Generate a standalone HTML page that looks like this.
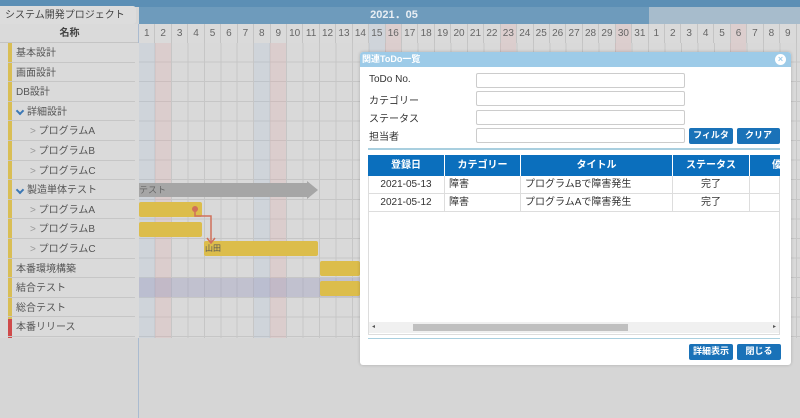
<!DOCTYPE html>
<html><head><meta charset="utf-8"><style>
*{margin:0;padding:0;box-sizing:border-box}
body{width:800px;height:418px;overflow:hidden;background:#d6d6d6;font-family:"Liberation Sans","Noto Sans CJK JP",sans-serif;position:relative;font-size:10px;color:#555}
.a{position:absolute}
.grid{left:139px;top:43px;width:661px;height:295px;background:
repeating-linear-gradient(90deg,transparent 0 15.45px,#c6c6c6 15.45px 16.45px),
repeating-linear-gradient(180deg,transparent 0 18.6px,#c6c6c6 18.6px 19.6px),#d9d9d9}
.day{top:24px;height:19px;width:16.45px;text-align:center;font-size:10px;line-height:19px;color:#666;border-right:1px solid #c4c4c4}
.row{left:8px;width:127px;height:19.6px;border-bottom:1px solid #c6c6c6;line-height:21px;font-size:10px;color:#555}
.inp{left:476px;width:209px;height:15px;background:#fff;border:1px solid #ccc;border-radius:2px}
.lab{left:369px;font-size:10px;color:#333}
.btn{background:#1a72b8;color:#fff;font-size:9px;text-align:center;line-height:15px;height:16px;border-radius:2px;font-weight:bold}
.th{top:155px;height:21px;background:#0b6fbd;color:#fff;font-weight:bold;font-size:10px;line-height:21px;text-align:center;border-right:1px solid #fff}
.td{height:18px;line-height:18px;font-size:10px;color:#333;border-right:1px solid #ddd;border-bottom:1px solid #ddd;padding-left:4px}
.v{display:inline-block;width:6px;height:6px;border-right:2px solid #3b78b5;border-bottom:2px solid #3b78b5;transform:rotate(45deg);margin:0 4px 2px 1px;vertical-align:middle}
</style></head><body>
<div class="a" style="left:0;top:0;width:800px;height:7px;background:#5c8fb5"></div>
<div class="a" style="left:139px;top:7px;width:510px;height:17px;background:#6e9bbc;color:#e8eef4;font-size:11px;text-align:center;line-height:17px;font-weight:bold">2021．05</div>
<div class="a" style="left:649px;top:7px;width:151px;height:17px;background:#a7bccc"></div>
<div class="a" style="left:0;top:6px;width:136px;height:18px;background:#dcdcdc;border-radius:0 3px 3px 0;font-size:10px;line-height:19px;padding-left:5px;color:#444">システム開発プロジェクト</div>
<div class="a" style="left:0;top:24px;width:139px;height:19px;background:#dadada;border-bottom:1px solid #c4c4c4;text-align:center;line-height:20px;font-weight:bold;color:#444;font-size:10px">名称</div>
<div class="a" style="left:0;top:24px;width:139px;height:394px;border-right:1px solid #aabbd0"></div>
<div class="a" style="left:139px;top:24px;width:661px;height:19px;background:#dadada"></div>
<div class="a grid"></div>
<div class="a" style="left:139px;top:43px;width:16px;height:295px;background:rgba(160,190,220,.18)"></div>
<div class="a" style="left:155px;top:43px;width:16px;height:295px;background:rgba(230,160,160,.2)"></div>
<div class="a" style="left:254px;top:43px;width:16px;height:295px;background:rgba(160,190,220,.18)"></div>
<div class="a" style="left:270px;top:43px;width:16px;height:295px;background:rgba(230,160,160,.2)"></div>
<div class="a" style="left:369px;top:24px;width:16px;height:314px;background:rgba(160,190,220,.18)"></div>
<div class="a" style="left:385px;top:24px;width:16px;height:314px;background:rgba(230,160,160,.2)"></div>
<div class="a" style="left:500px;top:24px;width:16px;height:30px;background:rgba(230,160,160,.2)"></div>
<div class="a" style="left:615px;top:24px;width:16px;height:30px;background:rgba(230,160,160,.2)"></div>
<div class="a" style="left:730px;top:24px;width:16px;height:30px;background:rgba(230,160,160,.2)"></div>
<div class="a" style="left:0;top:43px;width:139px;height:295px;background:#dadada"></div>
<div class="a" style="left:8px;top:43px;width:4px;height:276px;background:#d9be55"></div>
<div class="a" style="left:8px;top:319px;width:4px;height:19px;background:#cf4a4a"></div>
<div class="a row" style="top:43px;padding-left:8px">基本設計</div>
<div class="a row" style="top:62.6px;padding-left:8px">画面設計</div>
<div class="a row" style="top:82.2px;padding-left:8px">DB設計</div>
<div class="a row" style="top:101.8px;padding-left:8px"><span class="v"></span>詳細設計</div>
<div class="a row" style="top:121.4px;padding-left:22px"><span style="color:#999">&gt;</span> プログラムA</div>
<div class="a row" style="top:141px;padding-left:22px"><span style="color:#999">&gt;</span> プログラムB</div>
<div class="a row" style="top:160.6px;padding-left:22px"><span style="color:#999">&gt;</span> プログラムC</div>
<div class="a row" style="top:180.2px;padding-left:8px"><span class="v"></span>製造単体テスト</div>
<div class="a row" style="top:199.8px;padding-left:22px"><span style="color:#999">&gt;</span> プログラムA</div>
<div class="a row" style="top:219.4px;padding-left:22px"><span style="color:#999">&gt;</span> プログラムB</div>
<div class="a row" style="top:239px;padding-left:22px"><span style="color:#999">&gt;</span> プログラムC</div>
<div class="a row" style="top:258.6px;padding-left:8px">本番環境構築</div>
<div class="a row" style="top:278.2px;padding-left:8px">結合テスト</div>
<div class="a row" style="top:297.8px;padding-left:8px">総合テスト</div>
<div class="a row" style="top:317.4px;padding-left:8px">本番リリース</div>
<div class="a" style="left:139px;top:278px;width:221px;height:19px;background:rgba(150,150,190,.35)"></div>
<div class="a" style="left:139px;top:24px;display:flex">
<div class="day">1</div><div class="day">2</div><div class="day">3</div><div class="day">4</div><div class="day">5</div><div class="day">6</div><div class="day">7</div><div class="day">8</div><div class="day">9</div><div class="day">10</div><div class="day">11</div><div class="day">12</div><div class="day">13</div><div class="day">14</div><div class="day">15</div><div class="day">16</div><div class="day">17</div><div class="day">18</div><div class="day">19</div><div class="day">20</div><div class="day">21</div><div class="day">22</div><div class="day">23</div><div class="day">24</div><div class="day">25</div><div class="day">26</div><div class="day">27</div><div class="day">28</div><div class="day">29</div><div class="day">30</div><div class="day">31</div><div class="day">1</div><div class="day">2</div><div class="day">3</div><div class="day">4</div><div class="day">5</div><div class="day">6</div><div class="day">7</div><div class="day">8</div><div class="day">9</div>
</div>
<div class="a" style="left:139px;top:183px;width:169px;height:14px;background:#a6a6a6;color:#666;font-size:9px;line-height:14px">テスト</div>
<div class="a" style="left:307px;top:181px;width:0;height:0;border-left:11px solid #a6a6a6;border-top:9px solid transparent;border-bottom:9px solid transparent"></div>
<div class="a" style="left:139px;top:202px;width:63px;height:15px;background:#dcbd4b;border-radius:2px"></div>
<div class="a" style="left:139px;top:222px;width:63px;height:15px;background:#dcbd4b;border-radius:2px"></div>
<div class="a" style="left:204px;top:241px;width:114px;height:15px;background:#dcbd4b;border-radius:2px;font-size:8px;line-height:15px;color:#555;padding-left:1px">山田</div>
<div class="a" style="left:320px;top:261px;width:40px;height:15px;background:#dcbd4b;border-radius:2px"></div>
<div class="a" style="left:320px;top:281px;width:40px;height:15px;background:#dcbd4b;border-radius:2px"></div>
<svg class="a" style="left:190px;top:205px" width="30" height="40"><circle cx="5" cy="4" r="3" fill="#d0705a"/><path d="M5 4 V11 H21 V37" stroke="#d0705a" stroke-width="1.5" fill="none"/><path d="M17 33 L21 38 L25 33" stroke="#d0705a" stroke-width="1.5" fill="none"/></svg>
<div class="a" style="left:360px;top:52px;width:431px;height:313px;background:#fff;border-radius:3px;box-shadow:0 0 3px rgba(0,0,0,.2)"></div>
<div class="a" style="left:360px;top:52px;width:431px;height:15px;background:#9dcbe8;border-radius:3px 3px 0 0;color:#fff;font-weight:bold;font-size:9px;line-height:15px;padding-left:2px">関連ToDo一覧</div>
<div class="a" style="left:775px;top:54px;width:11px;height:11px;border-radius:50%;background:#fff;color:#9dcbe8;font-size:9px;line-height:11px;text-align:center;font-weight:bold">×</div>
<div class="a lab" style="top:74px">ToDo No.</div>
<div class="a lab" style="top:92px">カテゴリー</div>
<div class="a lab" style="top:110px">ステータス</div>
<div class="a lab" style="top:128px">担当者</div>
<div class="a inp" style="top:73px"></div>
<div class="a inp" style="top:91px"></div>
<div class="a inp" style="top:110px"></div>
<div class="a inp" style="top:128px"></div>
<div class="a btn" style="left:689px;top:128px;width:44px">フィルタ</div>
<div class="a btn" style="left:737px;top:128px;width:43px">クリア</div>
<div class="a" style="left:368px;top:148px;width:412px;height:2px;background:#a9cfdf"></div>
<div class="a" style="left:368px;top:155px;width:412px;height:180px;border:1px solid #ddd"></div>
<div class="a th" style="left:368px;width:77px">登録日</div>
<div class="a th" style="left:445px;width:76px">カテゴリー</div>
<div class="a th" style="left:521px;width:152px">タイトル</div>
<div class="a th" style="left:673px;width:77px">ステータス</div>
<div class="a th" style="left:750px;width:30px;text-align:left;padding-left:22px;border:0">優</div>
<div class="a" style="left:368px;top:176px;display:flex;flex-direction:column">
<div style="display:flex"><div class="td" style="width:77px;text-align:center;padding:0">2021-05-13</div><div class="td" style="width:76px">障害</div><div class="td" style="width:152px">プログラムBで障害発生</div><div class="td" style="width:77px;text-align:center;padding:0">完了</div><div class="td" style="width:30px"></div></div>
<div style="display:flex"><div class="td" style="width:77px;text-align:center;padding:0">2021-05-12</div><div class="td" style="width:76px">障害</div><div class="td" style="width:152px">プログラムAで障害発生</div><div class="td" style="width:77px;text-align:center;padding:0">完了</div><div class="td" style="width:30px"></div></div>
</div>
<div class="a" style="left:369px;top:322px;width:410px;height:11px;background:#f0f0f0;font-size:6px;color:#555;line-height:11px;padding-left:3px">◂<span style="float:right;padding-right:3px">▸</span></div>
<div class="a" style="left:413px;top:324px;width:215px;height:7px;background:#c0c0c0"></div>
<div class="a" style="left:368px;top:338px;width:412px;height:1px;background:#a9cfdf"></div>
<div class="a btn" style="left:689px;top:344px;width:44px">詳細表示</div>
<div class="a btn" style="left:737px;top:344px;width:44px">閉じる</div>
</body></html>
